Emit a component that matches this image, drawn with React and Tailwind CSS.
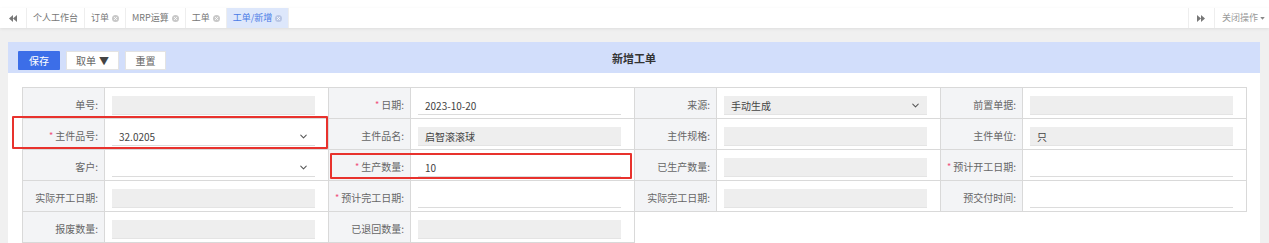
import React from "react";
import { ChevronDown } from "lucide-react";

const F = { fontFamily: '"Noto Sans CJK SC", "Noto Sans", sans-serif' };

function CloseDot({ active }) {
  return (
    <svg width="7" height="7" viewBox="0 0 8 8" className="ml-[3px]">
      <circle cx="4" cy="4" r="4" fill={active ? "#b9c6e4" : "#c8c8c8"} />
      <path d="M2.5 2.5 L5.5 5.5 M5.5 2.5 L2.5 5.5" stroke="#fff" strokeWidth="1.1" />
    </svg>
  );
}

function DoubleArrow({ dir }) {
  return (
    <svg width="8" height="7" viewBox="0 0 8 7">
      {dir === "left" ? (
        <>
          <path d="M4 0 L0 3.5 L4 7 Z" fill="#777" />
          <path d="M8 0 L4 3.5 L8 7 Z" fill="#777" />
        </>
      ) : (
        <>
          <path d="M0 0 L4 3.5 L0 7 Z" fill="#777" />
          <path d="M4 0 L8 3.5 L4 7 Z" fill="#777" />
        </>
      )}
    </svg>
  );
}

const tabs = [
  { t: "个人工作台", close: false },
  { t: "订单", close: true },
  { t: "MRP运算", close: true },
  { t: "工单", close: true },
  { t: "工单/新增", close: true, active: true },
];

function Label({ text, req }) {
  return (
    <div className="bg-[#f3f4f6] border-r border-b border-[#d9d9d9] flex items-center justify-end pr-[6px] pt-[3px] text-[10px] text-[#666] whitespace-nowrap">
      {req && <span className="text-[#f0507a] mr-[2px] text-[9px]">*</span>}
      <span>{text}:</span>
    </div>
  );
}

function Field({ value, gray, select }) {
  return (
    <div className="border-r border-b border-[#d9d9d9] pl-[7px] pr-[13px] pt-[8px]">
      <div
        className={
          "h-[19px] flex items-center pl-[7px] pr-[6px] text-[10px] text-[#444] border-b " +
          (gray ? "bg-[#eeeeee] border-[#e4e4e4]" : "bg-white border-[#dcdcdc]")
        }
      >
        <span className="flex-1">{value}</span>
        {select && <ChevronDown size={11} strokeWidth={2.2} color="#555" />}
      </div>
    </div>
  );
}

const rows = [
  [
    { l: "单号", gray: true },
    { l: "日期", req: true, v: "2023-10-20" },
    { l: "来源", gray: true, v: "手动生成", select: true },
    { l: "前置单据", gray: true },
  ],
  [
    { l: "主件品号", req: true, v: "32.0205", select: true },
    { l: "主件品名", gray: true, v: "启智滚滚球" },
    { l: "主件规格", gray: true },
    { l: "主件单位", gray: true, v: "只" },
  ],
  [
    { l: "客户", select: true },
    { l: "生产数量", req: true, v: "10" },
    { l: "已生产数量", gray: true },
    { l: "预计开工日期", req: true },
  ],
  [
    { l: "实际开工日期", gray: true },
    { l: "预计完工日期", req: true },
    { l: "实际完工日期", gray: true },
    { l: "预交付时间" },
  ],
  [
    { l: "报废数量", gray: true },
    { l: "已退回数量", gray: true },
  ],
];

export default function App() {
  return (
    <div style={F} className="w-[1269px] h-[243px] bg-[#f0f0f0] overflow-hidden">
      <div className="h-[8px] bg-white" />
      <div className="h-[20px] bg-white flex items-stretch shadow-[0_1px_3px_rgba(0,0,0,0.08)] relative z-10 text-[9px] text-[#777]">
        <div className="w-[27px] flex items-center justify-center border-r border-[#eeeeee]">
          <DoubleArrow dir="left" />
        </div>
        {tabs.map((tb) => (
          <div
            key={tb.t}
            className={
              "flex items-center px-[6px] border-r border-[#eeeeee] " +
              (tb.active ? "bg-[#dde7fb] text-[#4a7be6]" : "")
            }
          >
            <span>{tb.t}</span>
            {tb.close && <CloseDot active={tb.active} />}
          </div>
        ))}
        <div className="flex-1" />
        <div className="w-[27px] flex items-center justify-center border-l border-r border-[#eeeeee]">
          <DoubleArrow dir="right" />
        </div>
        <div className="flex items-center pl-[7px] pr-[4px] text-[#999]">
          <span>关闭操作</span>
          <svg width="5" height="3" viewBox="0 0 6 4" className="ml-[2px]">
            <path d="M0 0 L6 0 L3 3.5 Z" fill="#888" />
          </svg>
        </div>
      </div>
      <div className="pl-[8px] pr-[9px] pt-[14px]">
        <div className="bg-white h-[220px]">
          <div className="h-[31px] bg-[#d2defb] grid grid-cols-[1fr_auto_1fr] items-center">
            <div className="flex items-center gap-[6px] pl-[10px] pt-[5px]">
              <div className="h-[19px] w-[42px] bg-[#3c6ee8] text-white text-[10px] flex items-center justify-center rounded-[1px]">
                保存
              </div>
              <div className="h-[19px] w-[53px] bg-white border border-[#e3e3e3] text-[#666] text-[10px] flex items-center justify-center">
                取单<span className="ml-[3px] text-[10px] text-[#444]">▼</span>
              </div>
              <div className="h-[19px] w-[41px] bg-white border border-[#e3e3e3] text-[#666] text-[10px] flex items-center justify-center">
                重置
              </div>
            </div>
            <div className="text-[11px] font-bold text-[#333] pt-[1px]">新增工单</div>
            <div />
          </div>
          <div className="px-[14px] pt-[14px]">
            <div className="relative">
              <div className="grid grid-cols-[82px_224px_82px_224px_82px_224px_82px_224px] auto-rows-[31px] border-l border-t border-[#d9d9d9] w-[1225px]">
                {rows.map((r, ri) =>
                  r.map((c) => (
                    <React.Fragment key={ri + c.l}>
                      <Label text={c.l} req={c.req} />
                      <Field value={c.v} gray={c.gray} select={c.select} />
                    </React.Fragment>
                  ))
                )}
              </div>
              <div className="absolute left-[-10px] top-[29px] w-[316px] h-[33px] border-2 border-[#e8322d] rounded-[1px]" />
              <div className="absolute left-[308px] top-[66px] w-[302px] h-[26px] border-2 border-[#e8322d] rounded-[1px]" />
            </div>
          </div>
        </div>
      </div>
    </div>
  );
}
